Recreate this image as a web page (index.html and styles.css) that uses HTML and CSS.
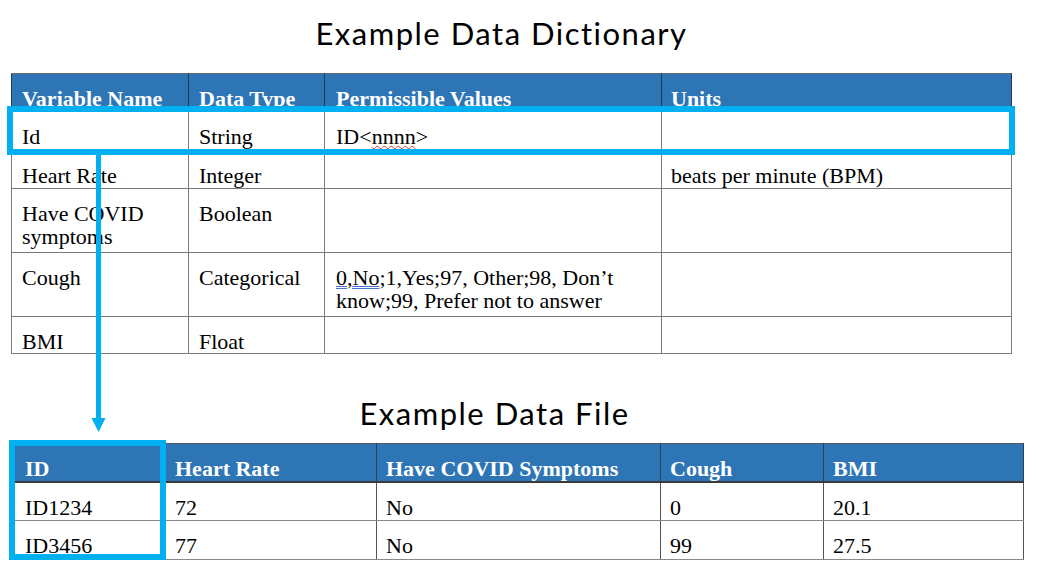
FILE: index.html
```html
<!DOCTYPE html>
<html lang="en">
<head>
<meta charset="utf-8">
<title>Example Data Dictionary</title>
<link rel="stylesheet" href="styles.css">
</head>
<body>
<div class="page">
  <h1 class="title title-dict">Example Data Dictionary</h1>
  <table class="grid dict">
    <colgroup>
      <col class="c-var"><col class="c-type"><col class="c-perm"><col class="c-units">
    </colgroup>
    <thead>
      <tr class="r-head"><th>Variable Name</th><th>Data Type</th><th>Permissible Values</th><th>Units</th></tr>
    </thead>
    <tbody>
      <tr class="r-id"><td>Id</td><td>String</td><td>ID&lt;<span class="squiggle">nnnn</span>&gt;</td><td></td></tr>
      <tr class="r-one"><td>Heart Rate</td><td>Integer</td><td></td><td>beats per minute (BPM)</td></tr>
      <tr class="r-two"><td>Have COVID symptoms</td><td>Boolean</td><td></td><td></td></tr>
      <tr class="r-two"><td>Cough</td><td>Categorical</td><td><span class="grammar">0,No</span>;1,Yes;97, Other;98, Don’t know;99, Prefer not to answer</td><td></td></tr>
      <tr class="r-last"><td>BMI</td><td>Float</td><td></td><td></td></tr>
    </tbody>
  </table>

  <h2 class="title title-file">Example Data File</h2>
  <table class="grid file">
    <colgroup>
      <col class="f-id"><col class="f-hr"><col class="f-covid"><col class="f-cough"><col class="f-bmi">
    </colgroup>
    <thead>
      <tr class="r-fhead"><th>ID</th><th>Heart Rate</th><th>Have COVID Symptoms</th><th>Cough</th><th>BMI</th></tr>
    </thead>
    <tbody>
      <tr class="r-frow"><td>ID1234</td><td>72</td><td>No</td><td>0</td><td>20.1</td></tr>
      <tr class="r-frow"><td>ID3456</td><td>77</td><td>No</td><td>99</td><td>27.5</td></tr>
    </tbody>
  </table>

  <div class="hl hl-row" aria-hidden="true"></div>
  <div class="hl hl-col" aria-hidden="true"></div>
  <svg class="arrow" width="20" height="280" viewBox="0 0 20 280" aria-hidden="true">
    <rect x="6" y="0" width="5" height="265" fill="#00B0F0"/>
    <polygon points="1.5,263 15.5,263 8.5,277" fill="#00B0F0"/>
  </svg>
</div>
</body>
</html>
```

FILE: styles.css
```css
* { box-sizing: border-box; }

html, body {
  margin: 0;
  padding: 0;
  background: #ffffff;
}

.page {
  position: relative;
  width: 1043px;
  height: 571px;
  overflow: hidden;
  display: flex;
  flex-direction: column;
}

.title {
  margin: 0;
  font-family: Lato, "Open Sans", sans-serif;
  font-weight: 400;
  font-size: 31px;
  letter-spacing: 1.5px;
  line-height: 36px;
  color: #000000;
  text-align: center;
}

.title-dict {
  padding-top: 15px;
  padding-right: 40px;
  height: 73px;
}

.title-file {
  margin-top: 41px;
  height: 48px;
  padding-right: 54px;
}

.grid {
  border-collapse: collapse;
  table-layout: fixed;
  font-family: "Liberation Serif", "Times New Roman", serif;
  font-size: 22px;
  line-height: 23px;
  color: #000000;
}

.grid th,
.grid td {
  padding: 13px 8px 0 10px;
  vertical-align: top;
  text-align: left;
  white-space: normal;
}

.grid th {
  background: #2E75B6;
  color: #ffffff;
  font-weight: 700;
}

/* Data dictionary */
.dict {
  margin-left: 11px;
  width: 1000px;
  border: 1px solid #6d6d6d;
}

.c-var { width: 177px; }
.c-type { width: 136px; }
.c-perm { width: 337px; }
.c-units { width: 350px; }

.dict th {
  border-left: 1px solid #1f3b5c;
  border-right: 1px solid #1f3b5c;
  border-top: 1px solid #6d6d6d;
}

.dict td {
  border: 1px solid #7a7a7a;
}

.dict td:nth-child(3),
.dict th:nth-child(3) { padding-left: 11px; }
.dict td:nth-child(4),
.dict th:nth-child(4) { padding-left: 9px; }

.r-head { height: 38px; }
.r-id { height: 39px; }
.r-one { height: 38px; }
.r-two { height: 64px; }
.r-last { height: 37px; }

.squiggle {
  text-decoration: underline wavy #d23a3a;
  text-decoration-thickness: 1px;
  text-underline-offset: 1px;
}

.grammar {
  text-decoration: underline double #4a6fd6;
  text-decoration-thickness: 1px;
  text-underline-offset: 1px;
}

/* Data file */
.file {
  margin-left: 12px;
  width: 1011px;
  border: 1px solid #5a5a5a;
}

.f-id { width: 151px; }
.f-hr { width: 213px; }
.f-covid { width: 284px; }
.f-cough { width: 163px; }
.f-bmi { width: 200px; }

.file th {
  border-left: 1px solid #2a3f5a;
  border-right: 1px solid #2a3f5a;
  border-bottom: 2px solid #3a3a3a;
  padding-left: 9px;
}

.file td {
  border-top: 1px solid #8a8a8a;
  border-bottom: 1px solid #8a8a8a;
  border-left: 1px solid #555555;
  border-right: 1px solid #555555;
  padding-left: 9px;
}

.file td:first-child,
.file th:first-child { padding-left: 12px; }

.file td:nth-child(2),
.file th:nth-child(2) { padding-left: 11px; }

.r-fhead { height: 38px; }
.r-frow { height: 39px; }

/* Overlays: highlight boxes and connecting arrow */
.hl {
  position: absolute;
  border: 6px solid #00B0F0;
  pointer-events: none;
}

.hl-row {
  left: 7px;
  top: 106px;
  width: 1008px;
  height: 49px;
}

.hl-col {
  left: 9px;
  top: 440px;
  width: 157px;
  height: 120px;
}

.arrow {
  position: absolute;
  left: 90px;
  top: 155px;
}
```
